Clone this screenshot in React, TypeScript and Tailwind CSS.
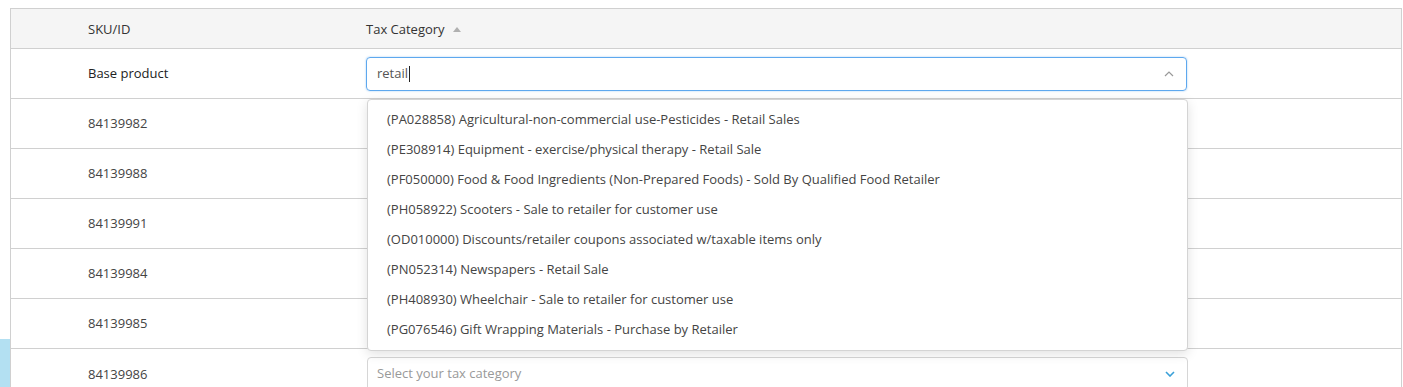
import React from "react";

const items = [
  "(PA028858) Agricultural-non-commercial use-Pesticides - Retail Sales",
  "(PE308914) Equipment - exercise/physical therapy - Retail Sale",
  "(PF050000) Food & Food Ingredients (Non-Prepared Foods) - Sold By Qualified Food Retailer",
  "(PH058922) Scooters - Sale to retailer for customer use",
  "(OD010000) Discounts/retailer coupons associated w/taxable items only",
  "(PN052314) Newspapers - Retail Sale",
  "(PH408930) Wheelchair - Sale to retailer for customer use",
  "(PG076546) Gift Wrapping Materials - Purchase by Retailer",
];

const skus = ["84139982", "84139988", "84139991", "84139984", "84139985"];

export default function App() {
  return (
    <div
      className="relative w-[1403px] h-[387px] overflow-hidden bg-white text-[13px] text-[#333]"
      style={{ fontFamily: '"Open Sans", "Noto Sans", sans-serif' }}
    >
      <div className="absolute left-0 top-[339px] w-[10px] h-[48px] bg-[#b3e0f2]" />
      <div className="pt-[8px] pl-[10px] pr-[1px]">
        <div className="border-t border-l border-r border-[#d0d0d0]">
          <div className="flex h-[40px] pt-[2px] items-center bg-[#f5f5f5] border-b border-[#d0d0d0]">
            <div className="w-[355px] pl-[77px]">SKU/ID</div>
            <div className="flex items-center gap-[8px]">
              <span>Tax Category</span>
              <svg width="8" height="5" viewBox="0 0 8 5" className="mt-[-1px]">
                <path d="M0 5 L4 0 L8 5 Z" fill="#b0b0b0" />
              </svg>
            </div>
          </div>
          <div className="flex h-[50px] items-center border-b border-[#d0d0d0]">
            <div className="w-[355px] pl-[77px] text-[#222]">Base product</div>
            <div className="w-[821px] h-[34px] rounded-[4px] border border-[#5ea8ee] shadow-[0_0_2px_rgba(94,168,238,0.6)] flex items-center pl-[10px] pr-[12px] text-[#555]">
              <span>retail</span>
              <span className="w-px h-[16px] bg-[#222] ml-[1px]" />
              <span className="flex-1" />
              <svg width="10" height="6" viewBox="0 0 10 6">
                <path d="M1 5 L5 1 L9 5" fill="none" stroke="#999" strokeWidth="1.2" />
              </svg>
            </div>
          </div>
          {skus.map((s) => (
            <div key={s} className="flex h-[50px] items-center border-b border-[#d0d0d0]">
              <div className="w-[355px] pl-[77px] text-[#444]">{s}</div>
            </div>
          ))}
          <div className="flex h-[50px]">
            <div className="w-[355px] pl-[77px] pt-[16px] text-[#444]">84139986</div>
            <div className="w-[821px] h-[34px] mt-[8px] ml-[1px] rounded-[4px] border border-[#d6d6d6] flex items-center pl-[9px] pr-[12px] text-[#999]">
              <span className="flex-1">Select your tax category</span>
              <svg width="10" height="6" viewBox="0 0 10 6">
                <path d="M1 1 L5 5 L9 1" fill="none" stroke="#3aa0d8" strokeWidth="1.6" />
              </svg>
            </div>
          </div>
        </div>
      </div>
      <div className="absolute left-[367px] top-[99px] w-[821px] h-[252px] rounded-[4px] border border-[#d4d4d4] bg-white shadow-[0_3px_12px_rgba(0,0,0,0.12)] py-[5px]">
        {items.map((t) => (
          <div key={t} className="h-[30px] flex items-center pl-[19px] text-[#444]">
            {t}
          </div>
        ))}
      </div>
    </div>
  );
}
